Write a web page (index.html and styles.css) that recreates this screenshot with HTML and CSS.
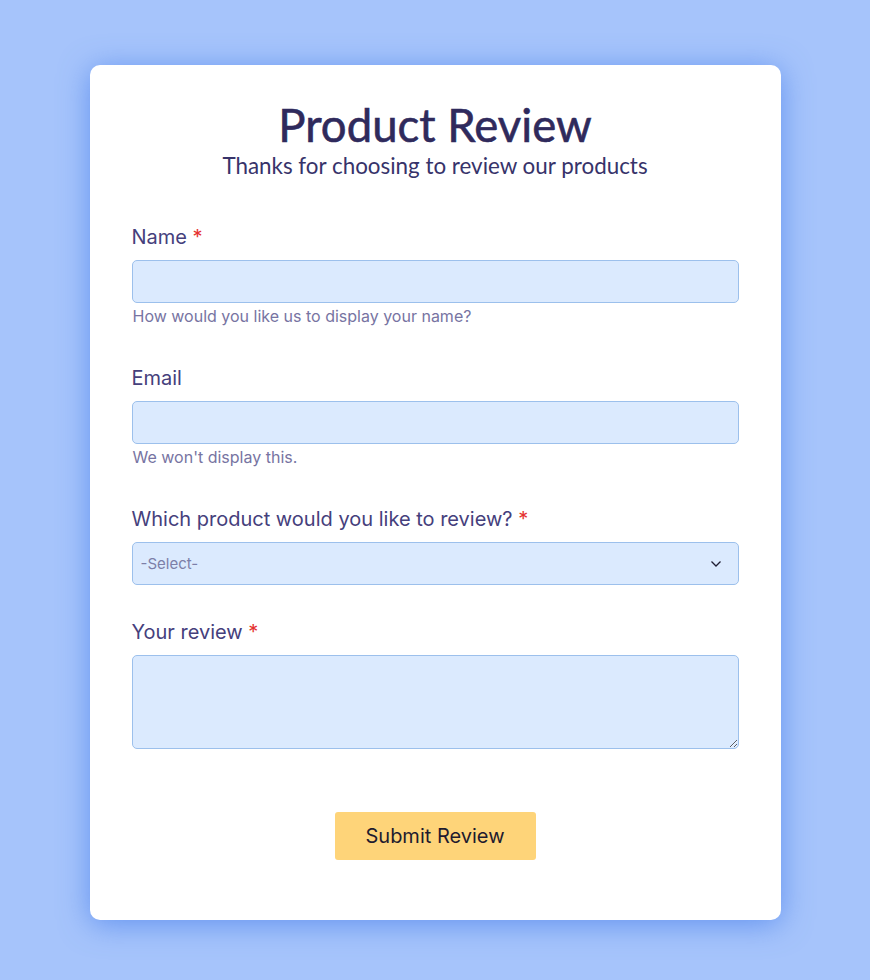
FILE: index.html
```html
<!DOCTYPE html>
<html lang="en">
<head>
    <meta charset="UTF-8">
    <meta name="viewport" content="width=device-width, initial-scale=1.0">
    <title>Product Review</title>
    <link rel="stylesheet" href="styles.css">
</head>
<body>
  <div class="card">
    <div class="header">
      <h1>Product Review</h1>
      <p class="subtitle">Thanks for choosing to review our products</p>
    </div>

    <form onsubmit="return false">
      <div class="field">
        <label for="name">Name <span class="req">*</span></label>
        <input type="text" id="name">
        <p class="help">How would you like us to display your name?</p>
      </div>

      <div class="field">
        <label for="email">Email</label>
        <input type="email" id="email">
        <p class="help">We won't display this.</p>
      </div>

      <div class="field">
        <label for="product">Which product would you like to review? <span class="req">*</span></label>
        <div class="select-wrap">
          <select id="product">
            <option>-Select-</option>
          </select>
          <svg class="chevron" width="12" height="8" viewBox="0 0 12 8">
            <path d="M1.5 1.5 L6 6 L10.5 1.5" fill="none" stroke="#1f1d33" stroke-width="1.3"/>
          </svg>
        </div>
      </div>

      <div class="field">
        <label for="review">Your review <span class="req">*</span></label>
        <textarea id="review"></textarea>
      </div>

      <div class="actions">
        <button type="submit">Submit Review</button>
      </div>
    </form>
  </div>
</body>
</html>
```

FILE: styles.css
```css
body {
  margin: 0;
  padding: 65px 0 60px;
  background-color: #a6c4fb;
  font-family: Inter, "Noto Sans", sans-serif;
}
.card {
  width: 607px;
  margin: 0 auto;
  padding: 32px 42px 60px;
  background: white;
  border-radius: 10px;
  box-shadow: 0 4px 30px rgba(70, 125, 235, 0.7);
}
.header {
  text-align: center;
  margin-bottom: 46px;
  font-family: Lato, sans-serif;
}
h1 {
  margin: 0;
  font-size: 45.5px;
  font-weight: 400;
  line-height: 56px;
  color: #2f2a5c;
  -webkit-text-stroke: 0.6px #2f2a5c;
}
.subtitle {
  margin: 0;
  font-size: 22.4px;
  line-height: 26px;
  color: #37336a;
}
.field {
  margin-bottom: 35px;
}
label {
  display: block;
  margin-bottom: 11px;
  font-size: 20px;
  line-height: 24px;
  color: #45407c;
}
.req {
  color: #e5322f;
}
input, select, textarea {
  display: block;
  box-sizing: border-box;
  width: 100%;
  background: #dbeafe;
  border: 1px solid #9cc0ec;
  border-radius: 5px;
  font-family: Inter, sans-serif;
  font-size: 15px;
}
input, select {
  height: 43px;
}
.select-wrap {
  position: relative;
}
select {
  appearance: none;
  padding: 0 8px;
  color: #7c7fa8;
}
.chevron {
  position: absolute;
  right: 17px;
  top: 18px;
}
textarea {
  height: 94px;
}
.help {
  margin: 3px 0 0;
  padding: 0 0 5px 1px;
  font-size: 16px;
  line-height: 20px;
  color: #7774a2;
}
.actions {
  text-align: center;
  padding-top: 28px;
}
button {
  width: 201px;
  height: 48px;
  background: #fed479;
  color: #1f1b2e;
  border: none;
  border-radius: 3px;
  font-family: Inter, sans-serif;
  font-size: 20px;
  cursor: pointer;
}
```
